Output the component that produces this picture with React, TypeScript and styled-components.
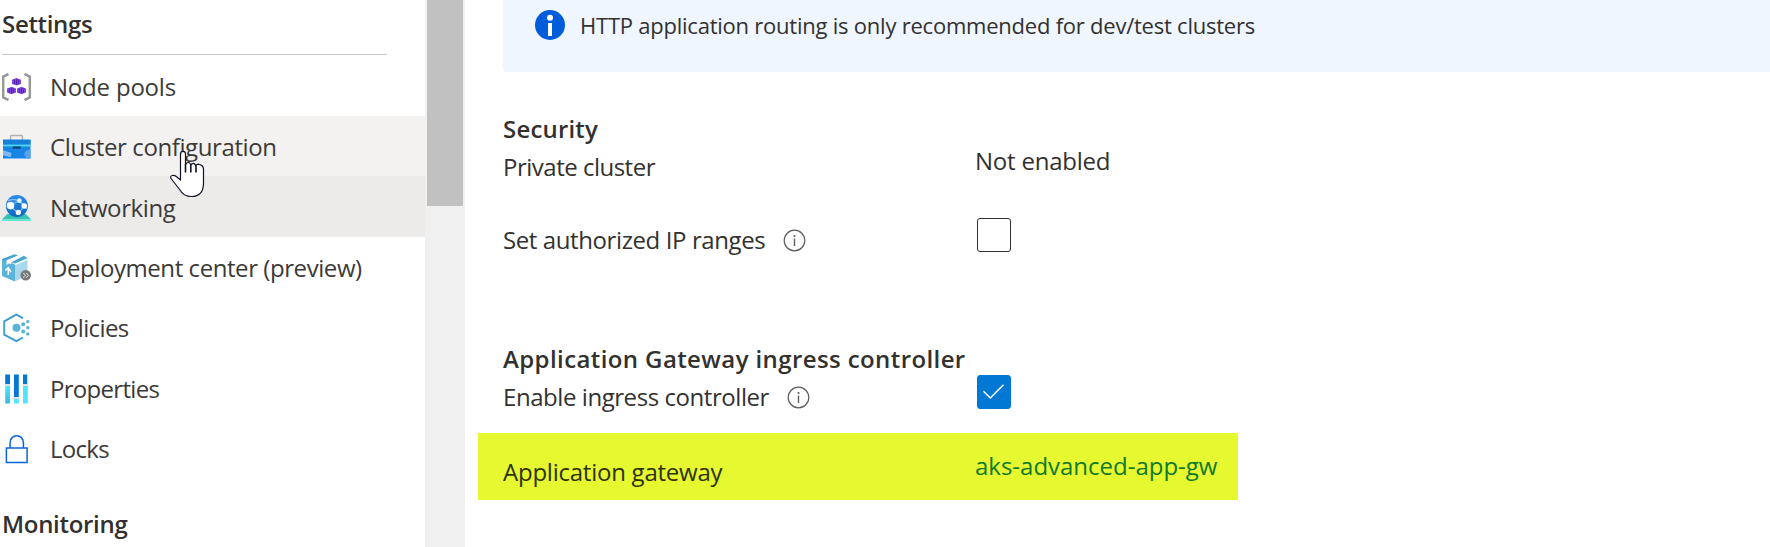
import React from 'react';
import styled, { createGlobalStyle } from 'styled-components';

const GlobalStyle = createGlobalStyle`
  * { box-sizing: border-box; }
  body {
    margin: 0;
    background: #fff;
    color: #323130;
    font-family: "Open Sans", "Noto Sans", sans-serif;
    font-size: 24px;
    overflow: hidden;
  }
`;

const Page = styled.div`
  display: flex;
  width: 1770px;
  height: 547px;
  overflow: hidden;
`;

const Sidebar = styled.nav`
  width: 425px;
  height: 547px;
  overflow: hidden;
  flex: none;
`;

const Text = styled.span<{ $track?: number }>`
  white-space: nowrap;
  line-height: 32px;
  letter-spacing: ${(p) => p.$track ?? 0}px;
`;

const MenuHeading = styled.div<{ $first?: boolean }>`
  display: flex;
  align-items: flex-start;
  height: ${(p) => (p.$first ? 55 : 60)}px;
  margin: 0 38px 0 2px;
  padding-top: ${(p) => (p.$first ? 8 : 30)}px;
  border-bottom: ${(p) => (p.$first ? '1px solid #c8c8c8' : 'none')};
  font-weight: 600;
`;

const MenuList = styled.div`
  padding-top: 0.6px;
`;

const MenuItem = styled.div<{ $state?: 'hover' | 'selected' }>`
  display: flex;
  align-items: center;
  gap: 18px;
  height: 60.33px;
  padding: 2.6px 0 0 2px;
  color: #3b3a39;
  background: ${(p) =>
    p.$state === 'hover' ? '#f3f2f1' : p.$state === 'selected' ? '#ecebe9' : 'transparent'};

  svg { flex: none; }
`;

const ScrollTrack = styled.div`
  width: 40px;
  flex: none;
  padding: 0 2px;
  background: #f0f0f0;
`;

const ScrollThumb = styled.div`
  height: 206px;
  background: #c1c1c1;
`;

const Main = styled.main`
  flex: 1;
  min-width: 0;
`;

const Banner = styled.div`
  display: flex;
  align-items: flex-start;
  gap: 15px;
  height: 72px;
  margin-left: 38px;
  padding: 9px 0 0 32px;
  border-bottom-left-radius: 4px;
  background: #eff6ff;
  font-size: 22px;

  svg { margin-top: 1px; }
`;

const Section = styled.section<{ $gap: number }>`
  padding: ${(p) => p.$gap}px 0 0 38px;
`;

const SectionTitle = styled.h2`
  display: flex;
  margin: 0;
  height: 32px;
  font-size: 24px;
  font-weight: 600;
`;

const Field = styled.div<{ $height: number }>`
  display: grid;
  grid-template-columns: 472px 1fr;
  align-items: start;
  height: ${(p) => p.$height}px;
`;

const HighlightedField = styled(Field)`
  width: 760px;
  margin-left: 13px;
  padding: 17px 0 0 25px;
  background: #e6f830;
  color: #2e3209;
`;

const Label = styled.div`
  display: flex;
  align-items: center;
  gap: 18px;
  padding-top: 6px;
`;

const GatewayLink = styled(Text)`
  color: #0f7a29;
`;

const Checkbox = styled.span<{ $checked?: boolean }>`
  display: flex;
  align-items: center;
  justify-content: center;
  width: 34px;
  height: 34px;
  margin-left: 2px;
  border: 1px solid ${(p) => (p.$checked ? '#0078d4' : '#323130')};
  border-radius: 3px;
  background: ${(p) => (p.$checked ? '#0078d4' : '#fff')};
`;

const Pointer = styled.svg`
  position: absolute;
  left: 168px;
  top: 149px;
`;

const Container = ({ x, y }: { x: number; y: number }) => (
  <g transform={`translate(${x} ${y})`}>
    <path d="M0 2.2 4.5 0.5 9 2.2V6.4L4.5 8 0 6.4Z" fill="#8044dc" />
    <path d="M2.4 2.2V6.6M4.5 1.8V7.2M6.4 2.2V6.6" stroke="#4e1f9c" strokeWidth="0.9" />
  </g>
);

const NodePoolsIcon = () => (
  <svg width="30" height="30" viewBox="0 0 30 30">
    <path d="M6.5 2 1.2 4.5V25.5L6.5 28M22.5 2 27.8 4.5V25.5L22.5 28" fill="none" stroke="#999" strokeWidth="2.5" />
    <Container x={10} y={5.5} />
    <Container x={5} y={14.2} />
    <Container x={15} y={14.2} />
  </svg>
);

const ToolboxIcon = () => (
  <svg width="30" height="30" viewBox="0 0 30 30">
    <defs>
      <linearGradient id="box" x1="0" y1="0" x2="0" y2="1">
        <stop offset="0" stopColor="#1988d9" />
        <stop offset="1" stopColor="#1784ea" />
      </linearGradient>
    </defs>
    <path d="M8.6 8V4.3Q8.6 3.4 9.5 3.4H19.5Q20.4 3.4 20.4 4.3V8" fill="none" stroke="#b3b1b0" strokeWidth="1.5" />
    <path d="M1 7.7H28.5V26.5H1Z" fill="url(#box)" />
    <path d="M1 7.7H28.5V12.5H1Z" fill="#1580dc" />
    <path d="M1 12.6H28.5V14.4H1Z" fill="#50d8f4" />
    <path d="M10.7 14.4H18.7V16.8H10.7Z" fill="#074a80" />
    <path d="M1 18.3 9.6 21 8.6 25.2 1 23.2Z" fill="#83b9f9" />
    <path d="M28.5 17.5Q22.5 18.2 22.3 22 22.5 24.5 24.7 26.5H28.5Z" fill="#5ea0ef" />
  </svg>
);

const NetworkIcon = () => (
  <svg width="30" height="30" viewBox="0 0 30 30">
    <defs>
      <linearGradient id="globe" x1="0" y1="0" x2="0" y2="1">
        <stop offset="0" stopColor="#2a8ce8" />
        <stop offset="1" stopColor="#0f65c4" />
      </linearGradient>
    </defs>
    <path d="M5.3 21H23.7L29 26.3H0Z" fill="#37c2b1" />
    <path d="M0 26.2H29V28H0Z" fill="#5fe6d0" />
    <circle cx="14.9" cy="13" r="11" fill="url(#globe)" />
    <path d="M6 7.5Q12 5.5 17 8M8 12 17 8Q23 11 24.5 16M9 14 16.5 20 22 13.5 18 8" fill="none" stroke="#8cc8f8" strokeWidth="1.1" />
    <circle cx="8.5" cy="12.6" r="3.8" fill="#f6f9fd" />
    <circle cx="17.3" cy="7.7" r="2.4" fill="#e6f1fc" />
    <circle cx="22.2" cy="13" r="2.8" fill="#f6f9fd" />
    <circle cx="16.3" cy="19.4" r="2.6" fill="#f6f9fd" />
  </svg>
);

const DeploymentIcon = () => (
  <svg width="30" height="30" viewBox="0 0 30 30">
    <path d="M0 6.5 13 11.5V28.5L0 23Z" fill="#59b4d9" />
    <path d="M13 11.5 25.5 6V22L13 28.5Z" fill="#a9d8ec" />
    <path d="M0 6 12.5 1.2 16 2.6 5 7.8 7.5 10.2 22 2.8 25.5 5.2 13 10.6 0 7.3Z" fill="#48a5cd" />
    <path d="M4.5 7.3 16.8 2.2 20.5 3.1 9 8.5V11.5L7 10.2 4.5 12Z" fill="#fff" />
    <path d="M13 11.8 25.5 6.3" stroke="#fff" strokeWidth="1" />
    <path d="M6.3 22V15M3.3 17.5 6.3 14.6 9 19.2" fill="none" stroke="#fff" strokeWidth="1.5" />
    <circle cx="23.7" cy="22.3" r="5.3" fill="#7a7a7a" />
    <path d="M21.2 19.9 23.4 22.3 21.2 24.7M24.2 19.9 26.4 22.3 24.2 24.7" fill="none" stroke="#e8e8e8" strokeWidth="1" />
  </svg>
);

const PoliciesIcon = () => (
  <svg width="30" height="30" viewBox="0 0 30 30">
    <path d="M21 5.2 14.3 1.6 2.2 8.4V21.6L14.3 28.1 21 24.5" fill="none" stroke="#3d9dcb" strokeWidth="1.9" />
    <circle cx="14.5" cy="14.8" r="4" fill="#59b4d9" />
    <g fill="#59b4d9">
      <circle cx="21.2" cy="11.2" r="2" />
      <circle cx="21.2" cy="18.4" r="2" />
      <circle cx="25.8" cy="8.6" r="1.7" />
      <circle cx="25.8" cy="14.8" r="1.7" />
      <circle cx="25.8" cy="21" r="1.7" />
    </g>
  </svg>
);

const PropertiesIcon = () => (
  <svg width="30" height="30" viewBox="0 0 30 30">
    <defs>
      <linearGradient id="bar" x1="0" y1="0" x2="0" y2="1">
        <stop offset="0" stopColor="#50e6ff" />
        <stop offset="1" stopColor="#32bedd" />
      </linearGradient>
    </defs>
    <path d="M3.2 0.5H8V10H3.2ZM12 0.5H16.8V23H12ZM21 0.5H25.2V10H21Z" fill="#0078d4" />
    <path d="M3.2 12H8V29.5H3.2Z" fill="url(#bar)" />
    <path d="M12 25H16.8V29.5H12ZM21 12H25.8V29.5H21Z" fill="#50e6ff" />
    <path d="M2.8 10H8.4V11.7H2.8ZM11.6 23.2H17.2V24.9H11.6ZM20.6 10H26.2V11.7H20.6Z" fill="#dcdcdc" />
  </svg>
);

const LockIcon = () => (
  <svg width="30" height="30" viewBox="0 0 30 30">
    <path d="M4.4 14.1H25.1V28.4H4.4ZM8.1 14V8.3A6.5 6.5 0 0 1 21.4 8.3V14" fill="none" stroke="#0a64e0" strokeWidth="1.5" />
  </svg>
);

const BannerInfoIcon = () => (
  <svg width="30" height="30" viewBox="0 0 30 30">
    <circle cx="15" cy="15" r="15" fill="#015cda" />
    <circle cx="15" cy="7.8" r="3" fill="#fff" />
    <path d="M13 13H17V26H13Z" fill="#fff" />
  </svg>
);

const InfoIcon = () => (
  <svg width="23" height="23" viewBox="0 0 23 23">
    <circle cx="11.5" cy="11.5" r="10.3" fill="none" stroke="#605e5c" strokeWidth="1.2" />
    <circle cx="11.5" cy="7" r="1.1" fill="#605e5c" />
    <path d="M11.5 9.5V17" stroke="#605e5c" strokeWidth="1.4" />
  </svg>
);

const CheckIcon = () => (
  <svg width="32" height="32" viewBox="0 0 32 32">
    <path d="M5.5 15.2 12.3 22 25.5 8.8" fill="none" stroke="#fff" strokeWidth="1.5" />
  </svg>
);

const menu: { label: string; track: number; icon: React.ReactNode; state?: 'hover' | 'selected' }[] = [
  { label: 'Node pools', track: -0.2, icon: <NodePoolsIcon /> },
  { label: 'Cluster configuration', track: -0.39, icon: <ToolboxIcon />, state: 'hover' },
  { label: 'Networking', track: -0.4, icon: <NetworkIcon />, state: 'selected' },
  { label: 'Deployment center (preview)', track: -0.43, icon: <DeploymentIcon /> },
  { label: 'Policies', track: -0.6, icon: <PoliciesIcon /> },
  { label: 'Properties', track: -0.7, icon: <PropertiesIcon /> },
  { label: 'Locks', track: -0.7, icon: <LockIcon /> },
];

export default function App() {
  return (
    <Page>
      <GlobalStyle />
      <Sidebar>
        <MenuHeading $first><Text $track={-0.32}>Settings</Text></MenuHeading>
        <MenuList>
          {menu.map((item) => (
            <MenuItem key={item.label} $state={item.state}>
              {item.icon}
              <Text $track={item.track}>{item.label}</Text>
            </MenuItem>
          ))}
        </MenuList>
        <MenuHeading><Text $track={-0.3}>Monitoring</Text></MenuHeading>
      </Sidebar>
      <ScrollTrack><ScrollThumb /></ScrollTrack>
      <Main>
        <Banner>
          <BannerInfoIcon />
          <Text $track={-0.23}>HTTP application routing is only recommended for dev/test clusters</Text>
        </Banner>
        <Section $gap={41}>
          <SectionTitle><Text $track={0.18}>Security</Text></SectionTitle>
          <Field $height={73}>
            <Label><Text $track={-0.5}>Private cluster</Text></Label>
            <Text $track={-0.22}>Not enabled</Text>
          </Field>
          <Field $height={34}>
            <Label><Text $track={-0.4}>Set authorized IP ranges</Text><InfoIcon /></Label>
            <Checkbox />
          </Field>
        </Section>
        <Section $gap={91}>
          <SectionTitle><Text $track={0.4}>Application Gateway ingress controller</Text></SectionTitle>
          <Field $height={58}>
            <Label><Text $track={-0.44}>Enable ingress controller</Text><InfoIcon /></Label>
            <Checkbox $checked><CheckIcon /></Checkbox>
          </Field>
        </Section>
        <HighlightedField $height={67}>
          <Label><Text $track={-0.24}>Application gateway</Text></Label>
          <GatewayLink $track={-0.01}>aks-advanced-app-gw</GatewayLink>
        </HighlightedField>
      </Main>
      <Pointer width="40" height="50" viewBox="0 0 40 50">
        <path
          d="M12.5 31V5Q12.5 2.3 15 2.3T17.5 5V16Q18 13.5 20.2 13.5T22.8 16.5Q23.3 14.3 25.3 14.3T27.8 17.5Q28.4 15.2 30 15.2Q35.2 16 35.5 20V34Q35.5 47.5 23.5 47.5 15.5 47.5 12 41L3 29.5Q1.8 27 4.5 26.5 7 26 9.5 28.5Z"
          fill="#fff" stroke="#111126" strokeWidth="1.2" strokeLinejoin="round"
        />
        <path d="M17.5 15V23.5M22.8 16.5V23.5M28 17.5V23.5" stroke="#111126" strokeWidth="1.6" />
      </Pointer>
    </Page>
  );
}
